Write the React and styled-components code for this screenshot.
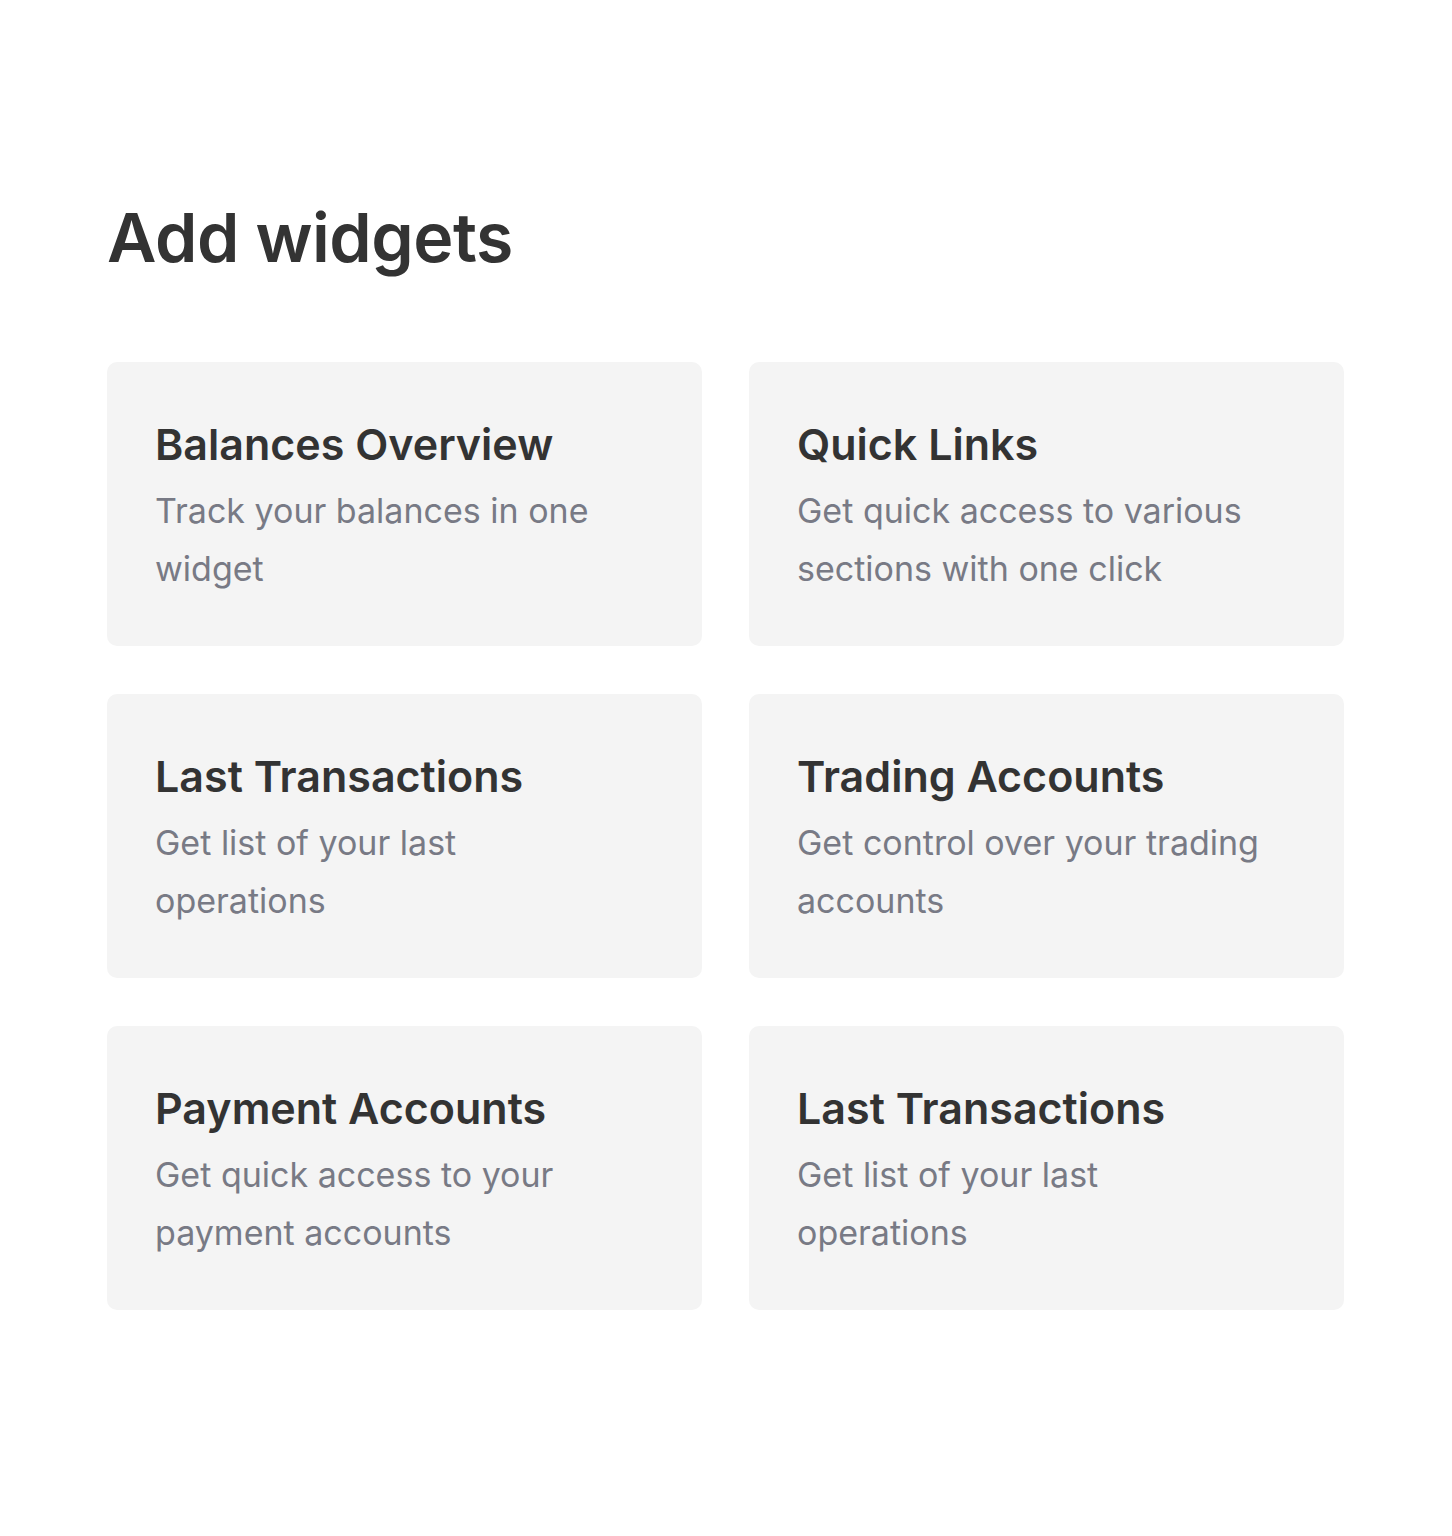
import React from 'react'
import styled, { createGlobalStyle } from 'styled-components'

const GlobalStyle = createGlobalStyle`
  body {
    margin: 0;
    background: #ffffff;
    font-family: Inter, "Noto Sans", sans-serif;
  }
`

const widgets = [
  { title: 'Balances Overview', lines: ['Track your balances in one', 'widget'] },
  { title: 'Quick Links', lines: ['Get quick access to various', 'sections with one click'] },
  { title: 'Last Transactions', lines: ['Get list of your last', 'operations'] },
  { title: 'Trading Accounts', lines: ['Get control over your trading', 'accounts'] },
  { title: 'Payment Accounts', lines: ['Get quick access to your', 'payment accounts'] },
  { title: 'Last Transactions', lines: ['Get list of your last', 'operations'] },
]

const App = () => {
  return (
    <Page>
      <GlobalStyle />
      <Heading>Add widgets</Heading>
      <Grid>
        {widgets.map((w, i) => (
          <Card key={i}>
            <Title>{w.title}</Title>
            <Text>
              {w.lines.map((l, j) => (
                <Line key={j}>{l}</Line>
              ))}
            </Text>
          </Card>
        ))}
      </Grid>
    </Page>
  )
}

const Page = styled.div`
  box-sizing: border-box;
  width: 1452px;
  min-height: 1536px;
  padding: 190px 108px 0 107px;
`

const Heading = styled.h1`
  margin: 0 0 78px;
  font-size: 68px;
  line-height: 94px;
  font-weight: 600;
  color: #333333;
  letter-spacing: -0.5px;
`

const Grid = styled.div`
  display: grid;
  grid-template-columns: 595px 595px;
  column-gap: 47px;
  row-gap: 48px;
`

const Card = styled.div`
  box-sizing: border-box;
  height: 284px;
  padding: 57px 48px 0;
  background: #f4f4f4;
  border-radius: 10px;
`

const Title = styled.div`
  font-size: 43px;
  line-height: 50px;
  font-weight: 600;
  color: #333333;
  margin-bottom: 13px;
`

const Text = styled.div`
  font-size: 34px;
  line-height: 58px;
  font-weight: 400;
  color: #787a85;
`

const Line = styled.div`
  white-space: nowrap;
`

export default App
